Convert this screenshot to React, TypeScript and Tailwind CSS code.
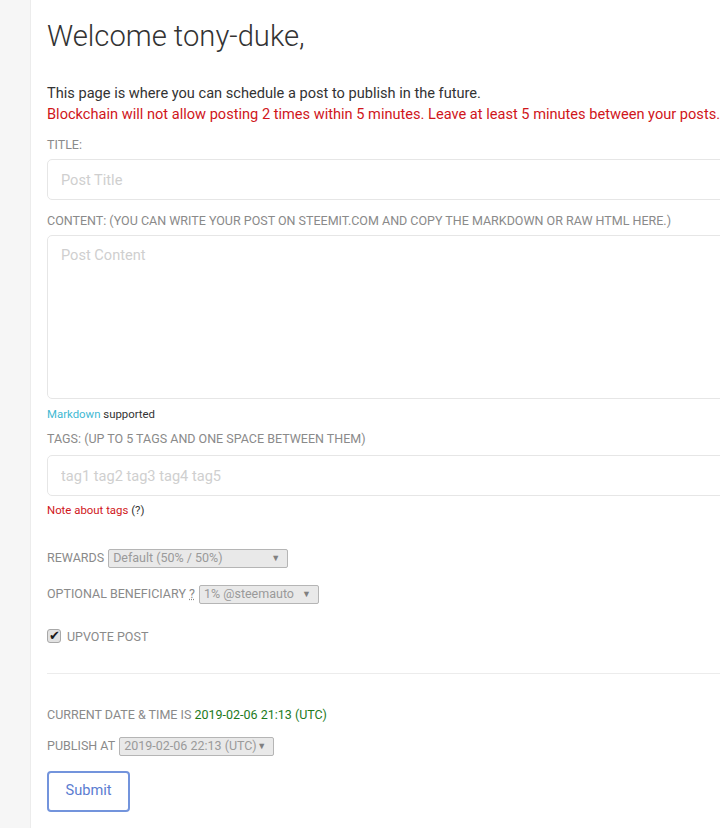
import React from 'react';

const labelCls = 'block text-[12.5px] uppercase text-[#8a8a8a] leading-[16px]';
const inputCls =
  'w-full h-[41px] rounded-[5px] border border-[#e6e6e6] bg-white px-[13px] text-[14.6px] text-[#333] placeholder:text-[#cfcfcf] outline-none';

function FakeSelect({ value, width }: { value: string; width: string }) {
  return (
    <span
      className={`inline-flex items-center justify-between h-[19px] ${width} border border-[#b5b5b5] bg-[#e9e9e9] rounded-[2px] pl-[4px] pr-[7px] text-[12.5px] normal-case text-[#9a9a9a] leading-none align-middle`}
    >
      <span>{value}</span>
      <span className="text-[9px] text-[#808080]">▼</span>
    </span>
  );
}

export default function App() {
  return (
    <div className="w-[720px] h-[828px] overflow-hidden flex bg-white font-['Roboto','Liberation_Sans',sans-serif]">
      <div className="w-[31px] shrink-0 bg-[#f6f6f6] border-r border-[#ececec]" />
      <main className="shrink-0 w-[720px] pl-[16px]">
        <h1 className="mt-[16px] text-[29.2px] font-light text-[#333] leading-[40px]">Welcome tony-duke,</h1>

        <div className="mt-[27px] text-[14.6px] leading-[21px]">
          <p className="text-[#333]">This page is where you can schedule a post to publish in the future.</p>
          <p className="text-[#d0161b] whitespace-nowrap">
            Blockchain will not allow posting 2 times within 5 minutes. Leave at least 5 minutes between your posts.
          </p>
        </div>

        <form className="mt-[12px] w-[700px]" onSubmit={(e) => e.preventDefault()}>
          <label className={labelCls}>Title:</label>
          <input className={`${inputCls} mt-[6px]`} placeholder="Post Title" />

          <label className={`${labelCls} mt-[13px]`}>
            Content: (You can write your post on steemit.com and copy the markdown or raw HTML here.)
          </label>
          <textarea
            className="mt-[6px] block w-full h-[164px] rounded-[5px] border border-[#e6e6e6] bg-white px-[13px] py-[9px] text-[14.6px] placeholder:text-[#cfcfcf] outline-none resize-none"
            placeholder="Post Content"
          />
          <p className="mt-[7px] text-[11.4px] leading-[16px] text-[#333]">
            <a className="text-[#3fb9d3]">Markdown</a> supported
          </p>

          <label className={`${labelCls} mt-[9px]`}>Tags: (up to 5 tags and one space between them)</label>
          <input className={`${inputCls} mt-[8px]`} placeholder="tag1 tag2 tag3 tag4 tag5" />
          <p className="mt-[6px] text-[11.4px] leading-[16px] text-[#333]">
            <a className="text-[#d0161b]">Note about tags</a> (?)
          </p>

          <div className="mt-[31px] flex items-center gap-[4px] text-[12.5px] uppercase text-[#8a8a8a] h-[19px]">
            <span>Rewards</span>
            <FakeSelect value="Default (50% / 50%)" width="w-[180px]" />
          </div>

          <div className="mt-[17px] flex items-center gap-[4px] text-[12.5px] uppercase text-[#8a8a8a] h-[19px]">
            <span>
              Optional beneficiary <span className="underline decoration-dotted">?</span>
            </span>
            <FakeSelect value="1% @steemauto" width="w-[120px]" />
          </div>

          <div className="mt-[21px] flex items-center gap-[6px] text-[12.5px] uppercase text-[#8a8a8a]">
            <span className="w-[14px] h-[14px] rounded-[3px] border border-[#a8a8a8] bg-[#e2e2e2] flex items-center justify-center text-[13px] leading-none text-[#1a1a1a]">
              ✔
            </span>
            <span className="mt-[3px]">Upvote post</span>
          </div>

          <hr className="mt-[26px] border-0 border-t border-[#ececec]" />

          <p className="mt-[33px] text-[12.5px] uppercase text-[#8a8a8a] leading-[16px]">
            Current date &amp; time is <span className="normal-case text-[#1d7a1d]">2019-02-06 21:13 (UTC)</span>
          </p>

          <div className="mt-[14px] flex items-center gap-[4px] text-[12.5px] uppercase text-[#8a8a8a] h-[19px]">
            <span>Publish at</span>
            <FakeSelect value="2019-02-06 22:13 (UTC)" width="w-[155px]" />
          </div>

          <button
            type="submit"
            className="mt-[15px] w-[83px] h-[41px] rounded-[4px] border-2 border-[#7394dc] bg-white text-[14.6px] text-[#5b7dd1]"
          >
            Submit
          </button>
        </form>
      </main>
    </div>
  );
}
